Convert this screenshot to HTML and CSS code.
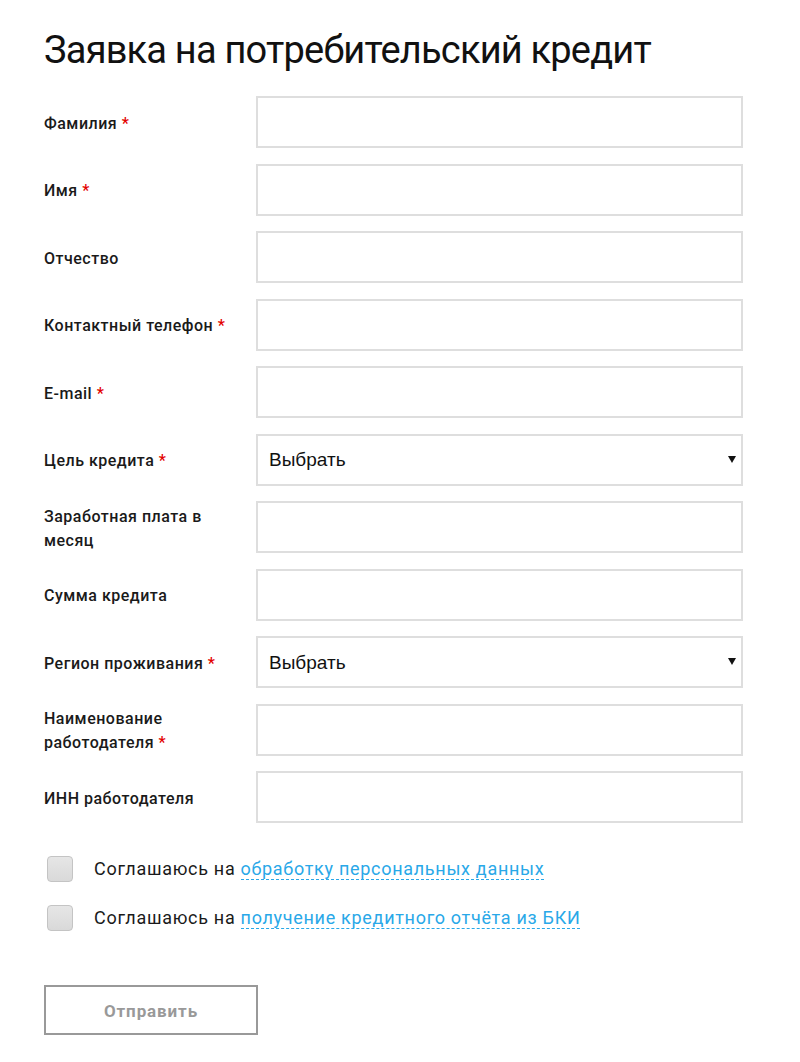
FILE: index.html
```html
<!DOCTYPE html>
<html lang="ru">
<head>
<meta charset="utf-8">
<title>Заявка на потребительский кредит</title>
<link rel="stylesheet" href="styles.css">
</head>
<body>
<div class="page">
  <h1 class="title">Заявка на потребительский кредит</h1>
  <form class="form">
    <div class="row"><label class="label">Фамилия <span class="req">*</span></label><input class="field" type="text"></div>
    <div class="row"><label class="label">Имя <span class="req">*</span></label><input class="field" type="text"></div>
    <div class="row"><label class="label">Отчество</label><input class="field" type="text"></div>
    <div class="row"><label class="label">Контактный телефон <span class="req">*</span></label><input class="field" type="text"></div>
    <div class="row"><label class="label">E-mail <span class="req">*</span></label><input class="field" type="text"></div>
    <div class="row"><label class="label">Цель кредита <span class="req">*</span></label><div class="select-wrap"><select class="field select"><option>Выбрать</option></select></div></div>
    <div class="row"><label class="label">Заработная плата в месяц</label><input class="field" type="text"></div>
    <div class="row"><label class="label">Сумма кредита</label><input class="field" type="text"></div>
    <div class="row"><label class="label">Регион проживания <span class="req">*</span></label><div class="select-wrap"><select class="field select"><option>Выбрать</option></select></div></div>
    <div class="row"><label class="label">Наименование<br>работодателя <span class="req">*</span></label><input class="field" type="text"></div>
    <div class="row"><label class="label">ИНН работодателя</label><input class="field" type="text"></div>

    <div class="agrees">
      <label class="agree"><span class="box"></span><span class="agree-text">Соглашаюсь на <a class="link" href="#">обработку персональных данных</a></span></label>
      <label class="agree"><span class="box"></span><span class="agree-text">Соглашаюсь на <a class="link" href="#">получение кредитного отчёта из БКИ</a></span></label>
    </div>

    <button class="submit" type="button">Отправить</button>
  </form>
</div>
</body>
</html>
```

FILE: styles.css
```css
html, body {
  margin: 0;
  padding: 0;
  background: #fff;
}
body {
  font-family: Roboto, "Liberation Sans", sans-serif;
  color: #1a1a1a;
}
.page {
  padding: 26px 0 0 44px;
}
.title {
  margin: 0 0 22px 0;
  font-size: 38px;
  font-weight: 400;
  line-height: 48px;
  color: #111;
  letter-spacing: -0.8px;
}
.form {
  display: flex;
  flex-direction: column;
}
.row {
  display: grid;
  grid-template-columns: 212px 487px;
  align-items: center;
  height: 52px;
  margin-bottom: 15.5px;
}
.label {
  font-size: 16px;
  font-weight: 500;
  line-height: 24px;
  letter-spacing: 0.5px;
  color: #1a1a1a;
  max-width: 195px;
  padding-top: 3px;
}
.req {
  color: #e30000;
}
.field {
  box-sizing: border-box;
  width: 487px;
  height: 52px;
  border: 2px solid #dedede;
  background: #fff;
  margin: 0;
  font-family: "Liberation Sans", Arial, sans-serif;
  font-size: 19px;
  color: #111;
  padding: 0 12px;
  outline: none;
}
.select-wrap {
  position: relative;
  width: 487px;
  height: 52px;
}
.select {
  appearance: none;
  -webkit-appearance: none;
  border-radius: 0;
  padding-left: 11px;
}
.select-wrap::after {
  content: "";
  position: absolute;
  right: 7px;
  top: 22px;
  width: 0;
  height: 0;
  border-left: 4px solid transparent;
  border-right: 4px solid transparent;
  border-top: 7px solid #111;
  pointer-events: none;
}
.agrees {
  display: flex;
  flex-direction: column;
  gap: 23px;
  margin-top: 17px;
  margin-left: 3px;
}
.agree {
  display: flex;
  align-items: center;
  height: 26px;
}
.box {
  box-sizing: border-box;
  width: 26px;
  height: 26px;
  border: 1px solid #c4c4c4;
  border-radius: 4px;
  background: linear-gradient(#e6e6e6, #d9d9d9);
  margin-right: 21px;
  flex: none;
}
.agree-text {
  font-size: 18px;
  letter-spacing: 0.7px;
  color: #1a1a1a;
}
.link {
  color: #29a8e8;
  text-decoration: none;
  border-bottom: 1px dashed #29a8e8;
}
.submit {
  margin-top: 54px;
  box-sizing: border-box;
  width: 214px;
  height: 50px;
  border: 2px solid #999;
  background: #fff;
  font-family: Roboto, "Liberation Sans", sans-serif;
  font-size: 17px;
  font-weight: 700;
  letter-spacing: 0.9px;
  color: #999;
  cursor: pointer;
  padding-top: 3px;
}
```
